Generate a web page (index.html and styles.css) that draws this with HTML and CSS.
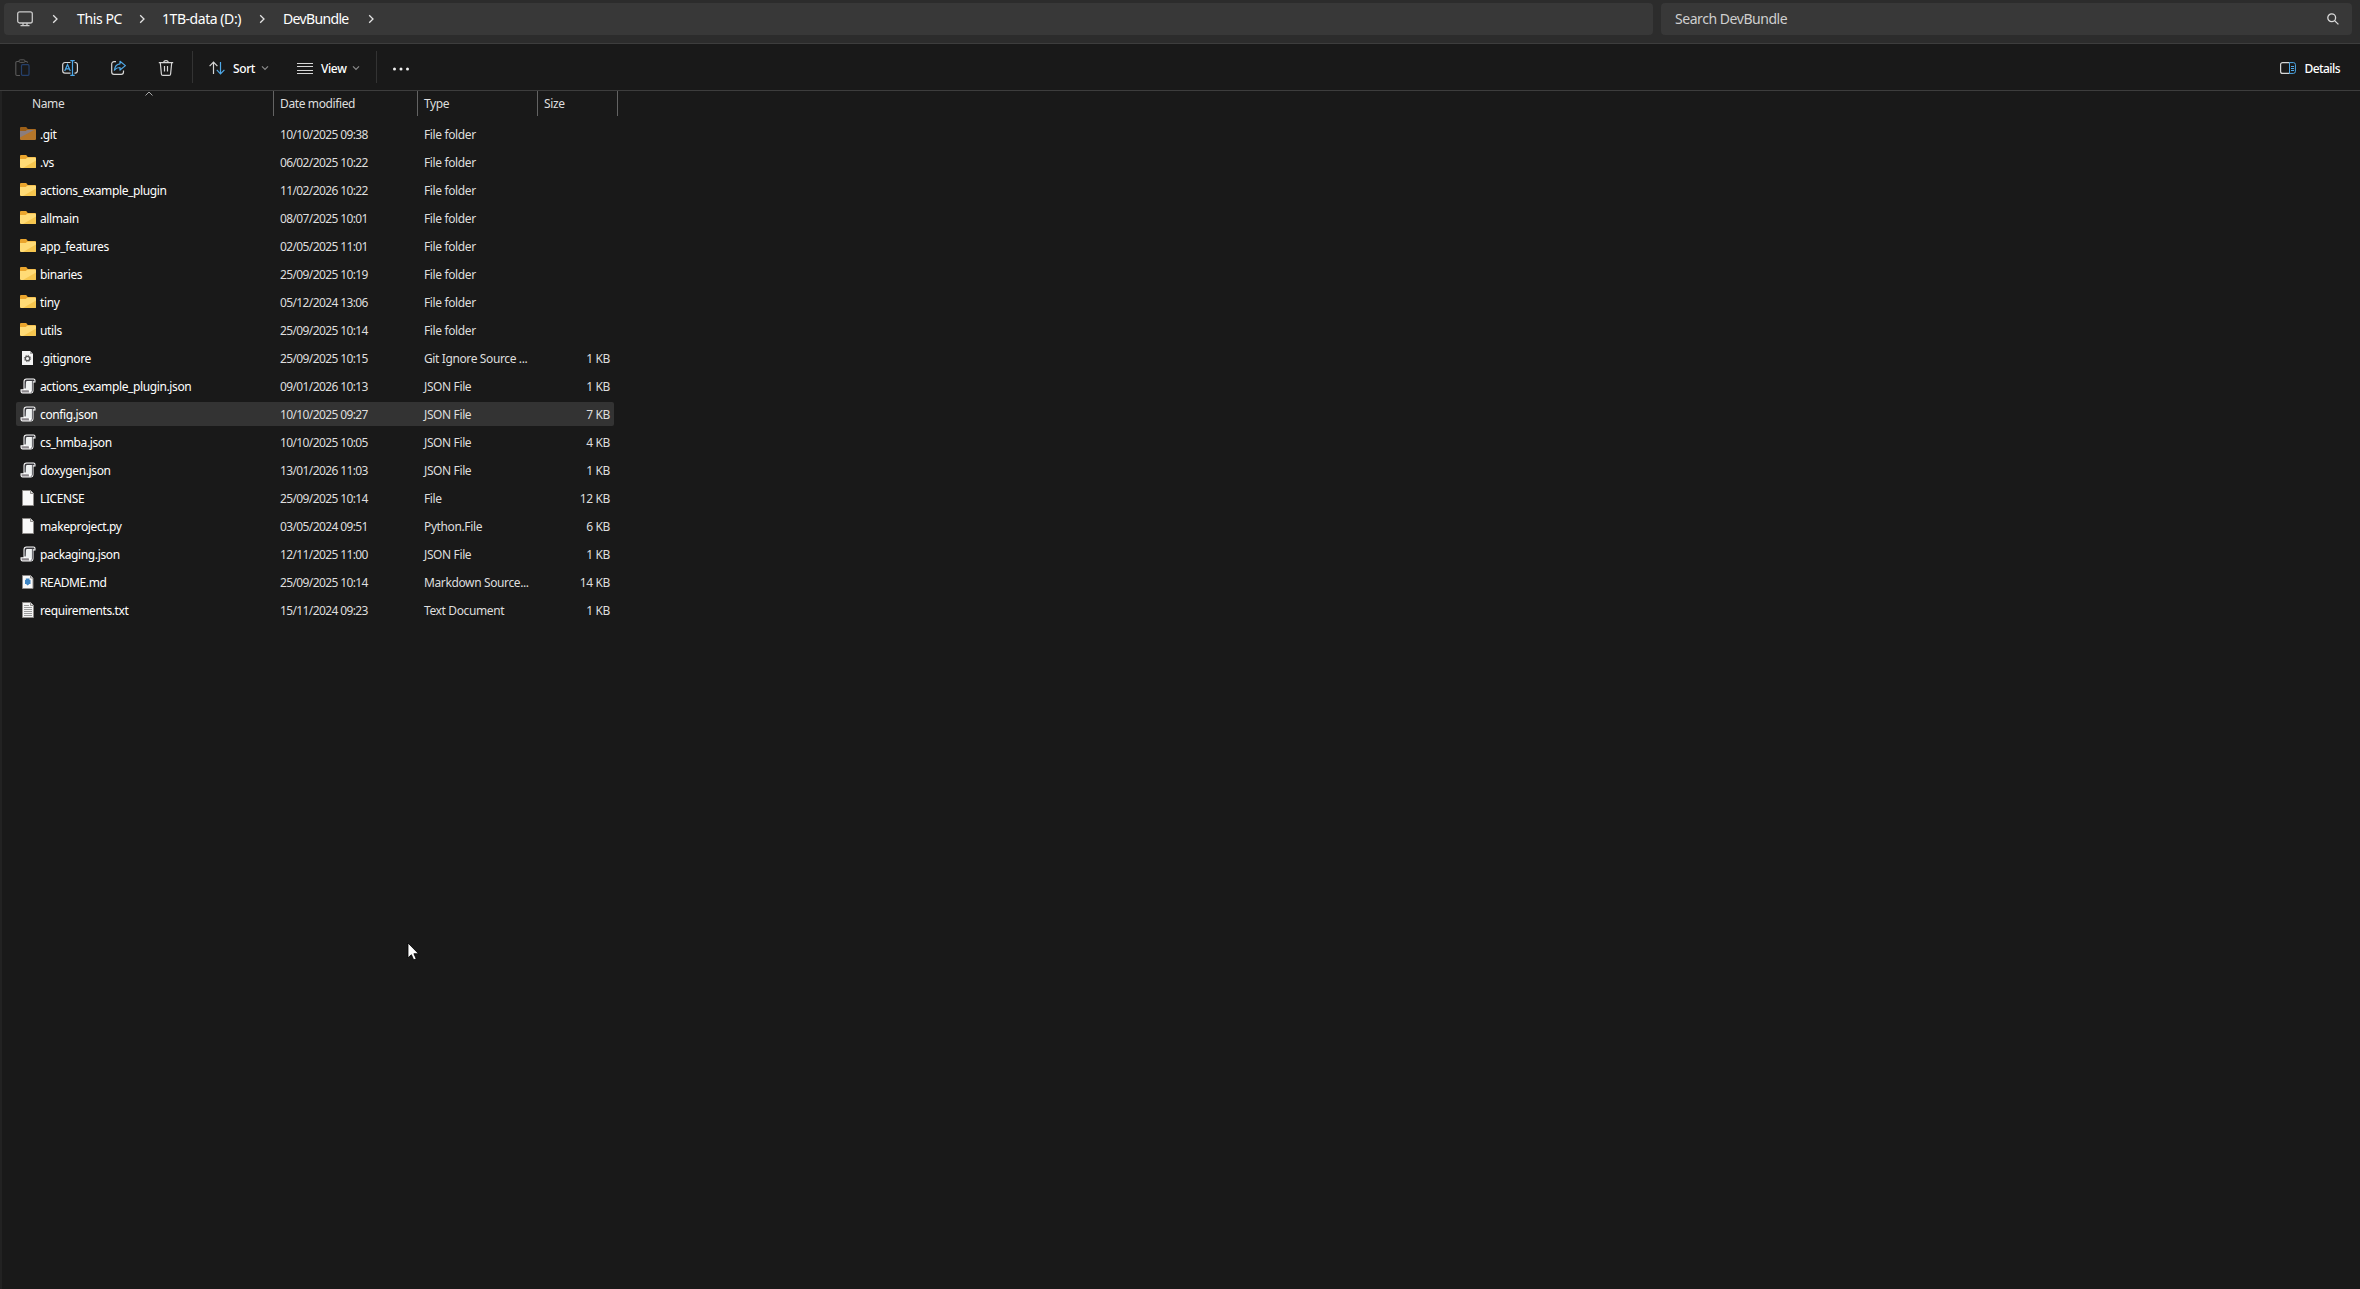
FILE: index.html
```html
<!DOCTYPE html>
<html lang="en">
<head>
  <meta charset="UTF-8" />
  <meta name="viewport" content="width=device-width, initial-scale=1" />
  <title>DevBundle</title>
  <link rel="stylesheet" href="styles.css">
</head>
<body>
  <!-- shared icons -->
  <svg class="defs" width="0" height="0">
    <symbol id="chev-right" viewBox="0 0 8 10"><path d="M2.2 1.2 6 5 2.2 8.8" fill="none" stroke="#e4e4e4" stroke-width="1.3"/></symbol>
    <symbol id="chev-down" viewBox="0 0 8 6"><path d="M1 1.3 4 4.3 7 1.3" fill="none" stroke="#8b8b8b" stroke-width="1.2"/></symbol>
    <symbol id="folder" viewBox="0 0 16 16">
      <path d="M0 2a1 1 0 0 1 1-1h5.2l1.6 2H15a1 1 0 0 1 1 1v3H0z" fill="#eaa52d"/>
      <path d="M0 5h5.6l2-1.6H15a1 1 0 0 1 1 1V13a1 1 0 0 1-1 1H1a1 1 0 0 1-1-1z" fill="#ffdb76"/>
      <path d="M16 6.5V13a1 1 0 0 1-1 1H3z" fill="#f6c64f"/>
    </symbol>
    <symbol id="folder-hidden" viewBox="0 0 16 16">
      <path d="M0 2a1 1 0 0 1 1-1h5.2l1.6 2H15a1 1 0 0 1 1 1v3H0z" fill="#9c5f17"/>
      <path d="M0 5h5.6l2-1.6H15a1 1 0 0 1 1 1V13a1 1 0 0 1-1 1H1a1 1 0 0 1-1-1z" fill="#b5762a"/>
      <path d="M0 5h5.6l2-1H14L0 11.5z" fill="#8b7d7d"/>
    </symbol>
    <symbol id="file" viewBox="0 0 16 16">
      <path d="M2.5.5h8l3 3v12h-11z" fill="#f9f9f9" stroke="#8d8a88"/>
      <path d="M10.5.5v3h3" fill="#e0e0e0" stroke="#8d8a88"/>
    </symbol>
    <symbol id="file-text" viewBox="0 0 16 16">
      <path d="M2.5.5h8l3 3v12h-11z" fill="#f4f4f4" stroke="#8d8a88"/>
      <path d="M10.5.5v3h3" fill="#e0e0e0" stroke="#8d8a88"/>
      <path d="M4 3.5h5M4 5.5h8M4 7.5h8M4 9.5h8M4 11.5h8M4 13.5h8" stroke="#9b9b9b"/>
    </symbol>
    <symbol id="file-gear" viewBox="0 0 16 16">
      <path d="M2 1h8l3 3v11H2z" fill="#f3f3f3"/>
      <path d="M10 1v3h3z" fill="#a9a9a9"/>
      <circle cx="7.5" cy="8.5" r="2.2" fill="none" stroke="#555" stroke-width="1.3"/>
      <circle cx="7.5" cy="8.5" r="3.2" fill="none" stroke="#666" stroke-width="1" stroke-dasharray="1.25 1.25"/>
    </symbol>
    <symbol id="file-md" viewBox="0 0 16 16">
      <path d="M2.5 1.5h8L13 4v10.5H2.5z" fill="#f9f9f9" stroke="#8d8a88"/>
      <path d="M10.5 1.5V4H13" fill="#e0e0e0" stroke="#8d8a88"/>
      <path d="M5.8 4.5h3.7V6h1v4H9.3l-1.6 1.6L6 10H5V6h.8z" fill="#3f86c4"/>
    </symbol>
    <symbol id="script" viewBox="0 0 16 16">
      <path d="M3.5 3.5c0-2 1-3 3-3h7c1.3 0 2 .8 2 2v2h-2v8c0 2-1 3-2.7 3H2.6C1.2 15.5.5 14.6.5 13v-1.7h3z" fill="#fff"/>
      <path d="M4.5 4c0-1.700.7-2.500 2.200-2.500h6.600c.8 0 1.200.4 1.200 1.200v.8h-1V3H6.600v7.500H4.500z" fill="#3b3b40"/>
      <path d="M6 3.5h5.7V12H5.6z" fill="#eef1f1"/>
      <path d="M12.4 3v9c0 1.500-.6 2.500-1.700 2.500" fill="none" stroke="#4a4a50" stroke-width=".9"/>
      <path d="M1.5 12.2h7.300c0 1.500.5 2.300 1.500 2.300H2.600c-.8 0-1.100-.8-1.100-2.300z" fill="#8b878b"/>
    </symbol>
  </svg>

  <header class="address-row">
    <nav class="address">
      <svg class="pc-icon" width="16" height="16" viewBox="0 0 16 16" fill="none" stroke="#c9c9c9" stroke-width="1.3">
        <rect x=".7" y=".8" width="14.6" height="11.2" rx="2"/>
        <path d="M6 12v2.500M10 12v2.500M3.500 14.600h9"/>
      </svg>
      <svg width="8" height="10"><use href="#chev-right"/></svg>
      <span class="crumb crumb-pc">This PC</span>
      <svg width="8" height="10"><use href="#chev-right"/></svg>
      <span class="crumb crumb-drive">1TB-data (D:)</span>
      <svg width="8" height="10"><use href="#chev-right"/></svg>
      <span class="crumb crumb-dir">DevBundle</span>
      <svg width="8" height="10"><use href="#chev-right"/></svg>
    </nav>
    <div class="search">
      <span>Search DevBundle</span>
      <svg width="12" height="12" viewBox="0 0 12 12" fill="none" stroke="#dadada" stroke-width="1.3">
        <circle cx="4.7" cy="4.7" r="3.9"/><path d="M7.6 7.6 11.4 11.4"/>
      </svg>
    </div>
  </header>

  <div class="toolbar">
    <div class="tools">
      <svg width="16" height="18" viewBox="0 0 16 18" fill="none">
        <path d="M5 2.500H3a1.200 1.200 0 0 0-1.200 1.200v11.600A1.200 1.200 0 0 0 3 16.500h3M11 2.500h1.300a1.200 1.200 0 0 1 1.200 1.200" stroke="#5a5a5a" stroke-width="1.1"/>
        <rect x="5" y=".8" width="6" height="2.6" rx="1.2" stroke="#5a5a5a"/>
        <rect x="7.5" y="5.7" width="7.5" height="10.6" rx="1" stroke="#25406b" stroke-width="1.2"/>
      </svg>
      <svg width="16" height="16" viewBox="0 0 16 16" fill="none" stroke-width="1.2">
        <path d="M8.500 2.500H3A2.300 2.300 0 0 0 .7 4.800v6A2.300 2.300 0 0 0 3 13.100h5.500M12.500 2.500h.7a2.300 2.300 0 0 1 2.200 2.300v6a2.300 2.300 0 0 1-2.200 2.300h-.7" stroke="#d6d6d6"/>
        <path d="M2.700 11 5.500 4.500 8.300 11M3.700 8.800h3.600M8.300.6h4.400M8.300 15.400h4.400M10.500.6v14.800" stroke="#4fa9e8"/>
      </svg>
      <svg width="16" height="16" viewBox="0 0 16 16" fill="none" stroke-width="1.2">
        <path d="M6 1.700H4A2.300 2.300 0 0 0 1.700 4v8A2.300 2.300 0 0 0 4 14.300h7.200a2.300 2.300 0 0 0 2.300-2.300v-1.500" stroke="#d6d6d6"/>
        <path d="M10 1.300 15.400 5.600 10 10V7.500c-2.500 0-4.100.8-5.600 2.700.3-3.500 2.100-6 5.600-6.400z" stroke="#4fa9e8" stroke-linejoin="round"/>
      </svg>
      <svg width="16" height="16" viewBox="0 0 16 16" fill="none" stroke="#d6d6d6" stroke-width="1.2">
        <path d="M.8 2.700h14.400M5.800 2.500C5.800 1.200 6.700.6 8 .6s2.200.6 2.200 1.900M2.300 2.800l1.100 11.200a1.500 1.500 0 0 0 1.500 1.400h6.200a1.500 1.500 0 0 0 1.500-1.400L13.700 2.800M6.500 6v5.500M9.500 6v5.500"/>
      </svg>
    </div>
    <span class="sep"></span>
    <div class="menu menu-sort">
      <svg width="16" height="14" viewBox="0 0 16 14" fill="none" stroke-width="1.2">
        <path d="M4.500 13V1.200M.6 5.200 4.500 1.200 8.400 5.200" stroke="#d6d6d6"/>
        <path d="M11.500 1v11.800M7.800 8.900l3.700 3.900 3.900-3.900" stroke="#4fa9e8"/>
      </svg>
      <span>Sort</span>
      <svg width="8" height="6"><use href="#chev-down"/></svg>
    </div>
    <div class="menu menu-view">
      <svg width="16" height="11" viewBox="0 0 16 11" stroke="#d6d6d6">
        <path d="M0 .5h16M0 3.500h16M0 7.500h16M0 10.500h16"/>
      </svg>
      <span>View</span>
      <svg width="8" height="6"><use href="#chev-down"/></svg>
    </div>
    <span class="sep"></span>
    <svg class="more" width="18" height="4" viewBox="0 0 18 4" fill="#f0f0f0">
      <circle cx="2.5" cy="2" r="1.5"/><circle cx="9" cy="2" r="1.5"/><circle cx="15.5" cy="2" r="1.5"/>
    </svg>
    <div class="menu menu-details">
      <svg width="16" height="12" viewBox="0 0 16 12" fill="none">
        <path d="M9.500.6H2.600a2 2 0 0 0-2 2v6.800a2 2 0 0 0 2 2h6.900" stroke="#d6d6d6" stroke-width="1.2"/>
        <path d="M9.500.6h3.900a2 2 0 0 1 2 2v6.800a2 2 0 0 1-2 2H9.500zM11 4.500h3M11 6.500h3M11 8.500h3" stroke="#4fa9e8"/>
      </svg>
      <span>Details</span>
    </div>
  </div>

  <main class="files">
    <div class="head">
      <span class="col-name">Name<svg class="sort-mark" width="8" height="5" viewBox="0 0 8 5"><path d="M.5 4.500 4 1 7.500 4.500" fill="none" stroke="#a8a8a8"/></svg></span>
      <span>Date modified</span>
      <span>Type</span>
      <span>Size</span>
    </div>
    <div class="list">
      <div class="row"><svg><use href="#folder-hidden"/></svg><span class="name">.git</span><span class="date">10/10/2025 09:38</span><span>File folder</span><span class="size"></span></div>
      <div class="row"><svg><use href="#folder"/></svg><span class="name">.vs</span><span class="date">06/02/2025 10:22</span><span>File folder</span><span class="size"></span></div>
      <div class="row"><svg><use href="#folder"/></svg><span class="name">actions_example_plugin</span><span class="date">11/02/2026 10:22</span><span>File folder</span><span class="size"></span></div>
      <div class="row"><svg><use href="#folder"/></svg><span class="name">allmain</span><span class="date">08/07/2025 10:01</span><span>File folder</span><span class="size"></span></div>
      <div class="row"><svg><use href="#folder"/></svg><span class="name">app_features</span><span class="date">02/05/2025 11:01</span><span>File folder</span><span class="size"></span></div>
      <div class="row"><svg><use href="#folder"/></svg><span class="name">binaries</span><span class="date">25/09/2025 10:19</span><span>File folder</span><span class="size"></span></div>
      <div class="row"><svg><use href="#folder"/></svg><span class="name">tiny</span><span class="date">05/12/2024 13:06</span><span>File folder</span><span class="size"></span></div>
      <div class="row"><svg><use href="#folder"/></svg><span class="name">utils</span><span class="date">25/09/2025 10:14</span><span>File folder</span><span class="size"></span></div>
      <div class="row"><svg><use href="#file-gear"/></svg><span class="name">.gitignore</span><span class="date">25/09/2025 10:15</span><span>Git Ignore Source ...</span><span class="size">1 KB</span></div>
      <div class="row"><svg><use href="#script"/></svg><span class="name">actions_example_plugin.json</span><span class="date">09/01/2026 10:13</span><span>JSON File</span><span class="size">1 KB</span></div>
      <div class="row selected"><svg><use href="#script"/></svg><span class="name">config.json</span><span class="date">10/10/2025 09:27</span><span>JSON File</span><span class="size">7 KB</span></div>
      <div class="row"><svg><use href="#script"/></svg><span class="name">cs_hmba.json</span><span class="date">10/10/2025 10:05</span><span>JSON File</span><span class="size">4 KB</span></div>
      <div class="row"><svg><use href="#script"/></svg><span class="name">doxygen.json</span><span class="date">13/01/2026 11:03</span><span>JSON File</span><span class="size">1 KB</span></div>
      <div class="row"><svg><use href="#file"/></svg><span class="name">LICENSE</span><span class="date">25/09/2025 10:14</span><span>File</span><span class="size">12 KB</span></div>
      <div class="row"><svg><use href="#file"/></svg><span class="name">makeproject.py</span><span class="date">03/05/2024 09:51</span><span>Python.File</span><span class="size">6 KB</span></div>
      <div class="row"><svg><use href="#script"/></svg><span class="name">packaging.json</span><span class="date">12/11/2025 11:00</span><span>JSON File</span><span class="size">1 KB</span></div>
      <div class="row"><svg><use href="#file-md"/></svg><span class="name">README.md</span><span class="date">25/09/2025 10:14</span><span>Markdown Source...</span><span class="size">14 KB</span></div>
      <div class="row"><svg><use href="#file-text"/></svg><span class="name">requirements.txt</span><span class="date">15/11/2024 09:23</span><span>Text Document</span><span class="size">1 KB</span></div>
    </div>
  </main>

  <svg class="cursor" width="13" height="20" viewBox="0 0 13 20">
    <path d="M1 1v14.800l3.400-3.100 2.300 5.200 2.500-1.100-2.300-5.100H11.500z" fill="#fff" stroke="#000" stroke-width=".8"/>
  </svg>
</body>
</html>
```

FILE: styles.css
```css
:root {
  --bg: #191919;
  --bar: #2c2c2c;
  --field: #383838;
  --line: #3d3d3d;
  --text: #fff;
  --muted: #dedede;
}
* {
  box-sizing: border-box;
}
body {
  margin: 0;
  height: 100vh;
  display: flex;
  flex-direction: column;
  background: var(--bg);
  color: var(--text);
  font-family: "Noto Sans", "Open Sans", sans-serif;
  font-size: 12px;
  line-height: 16px;
  letter-spacing: -0.38px;
  overflow: hidden;
  white-space: nowrap;
}
svg {
  display: block;
  flex: none;
}
.defs {
  position: absolute;
}

/* address bar */
.address-row {
  display: flex;
  gap: 8px;
  height: 44px;
  padding: 3px 8px 8px 4px;
  background: var(--bar);
  border-bottom: 1px solid var(--line);
  font-size: 14px;
}
.address,
.search {
  display: flex;
  align-items: center;
  height: 32px;
  background: var(--field);
  border-radius: 4px;
}
.address {
  width: 1649px;
  padding-left: 13px;
}
.pc-icon {
  margin-right: 18px;
}
.crumb {
  padding-left: 18px;
}
.crumb-pc {
  width: 79px;
}
.crumb-drive {
  width: 112px;
  padding-left: 16px;
  letter-spacing: -0.45px;
}
.crumb-dir {
  width: 101px;
  padding-left: 17px;
  letter-spacing: -0.65px;
}
.search {
  flex: 1;
  justify-content: space-between;
  padding: 0 13px 0 14px;
  color: #cfcfcf;
  letter-spacing: -0.45px;
}

/* toolbar */
.toolbar {
  display: flex;
  align-items: center;
  height: 47px;
  padding: 2px 20px 0 14px;
  border-bottom: 1px solid var(--line);
}
.tools {
  display: flex;
  align-items: center;
  gap: 32px;
  width: 178px;
}
.sep {
  width: 1px;
  height: 32px;
  margin-top: -2px;
  background: #333;
}
.menu {
  display: flex;
  align-items: center;
  font-weight: 500;
}
.menu span {
  margin-left: 8px;
  padding-top: 2px;
}
.menu-sort {
  width: 104px;
  padding-left: 16px;
}
.menu-sort span {
  width: 28px;
}
.menu-view {
  width: 79px;
}
.menu-view span {
  width: 31px;
}
.more {
  margin: 1px 0 0 15px;
}
.menu-details {
  margin-left: auto;
  letter-spacing: -0.55px;
}

/* file list */
.files {
  flex: 1;
  border-left: 2px solid #222;
}
.head {
  display: grid;
  grid-template-columns: 272px 144px 120px 80px;
  height: 25px;
  color: var(--muted);
}
.head span {
  display: flex;
  align-items: center;
  padding: 0 0 0 6px;
  border-right: 1px solid #636363;
}
.head .col-name {
  padding-left: 30px;
  position: relative;
}
.sort-mark {
  position: absolute;
  left: 143px;
  top: 0;
}
.list {
  padding: 6px 0 0 14px;
}
.row {
  display: grid;
  grid-template-columns: 20px 240px 144px 120px 1fr;
  align-items: center;
  width: 598px;
  height: 24px;
  margin-bottom: 4px;
  padding: 0 4px;
  border-radius: 2px;
  color: var(--muted);
}
.row svg {
  width: 16px;
  height: 16px;
}
.row span {
  padding-top: 2px;
}
.row .name {
  color: var(--text);
}
.row .date {
  letter-spacing: -0.61px;
}
.row .size {
  text-align: right;
}
.selected {
  background: #333;
}

/* pointer */
.cursor {
  position: absolute;
  left: 407px;
  top: 942px;
}
```
